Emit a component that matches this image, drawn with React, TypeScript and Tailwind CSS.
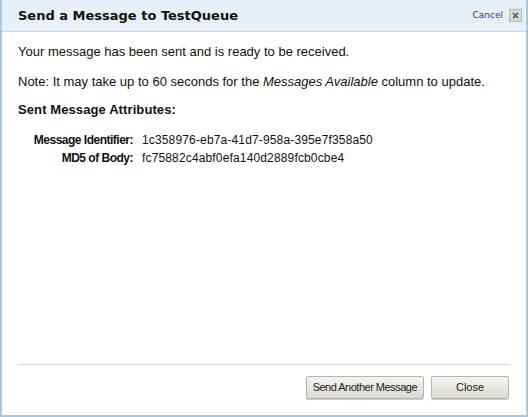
export default function App() {
  return (
    <div className="w-[528px] h-[417px] bg-white font-['Liberation_Sans',Arial,sans-serif] text-[#111]">
      <div className="flex flex-col h-full border-x-2 border-b-2 border-[#a9c8e0]">
        <header className="h-[32px] shrink-0 flex items-center justify-between pl-4 pr-[4px] bg-[#e8f0f7] border-b border-[#c6dbeb]">
          <h1 className="font-['DejaVu_Sans',Verdana,sans-serif] font-bold text-[13px] text-[#111]">
            Send a Message to TestQueue
          </h1>
          <div className="flex items-center gap-[6px]">
            <a className="font-['DejaVu_Sans',Verdana,sans-serif] text-[9px] text-[#333399] cursor-pointer">Cancel</a>
            <button className="w-[13px] h-[13px] flex items-center justify-center bg-[#d9d9d9] border border-[#b9b9b9]">
              <svg width="7" height="7" viewBox="0 0 7 7">
                <path d="M1 1 L6 6 M6 1 L1 6" stroke="#555" strokeWidth="1.6" />
              </svg>
            </button>
          </div>
        </header>

        <main className="flex-1 flex flex-col px-4 pt-[11px] text-[13px]">
          <p className="leading-[17px]">Your message has been sent and is ready to be received.</p>
          <p className="leading-[17px] mt-[13px]">
            Note: It may take up to 60 seconds for the <i>Messages Available</i> column to update.
          </p>
          <h2 className="font-bold text-[13px] tracking-[0.1px] leading-[18px] mt-[11px]">Sent Message Attributes:</h2>
          <dl className="grid grid-cols-[115px_1fr] gap-x-[9px] mt-[12px] text-[12px] leading-[18px]">
            <dt className="font-bold text-right tracking-[-0.5px]">Message Identifier:</dt>
            <dd className="tracking-[0.15px]">1c358976-eb7a-41d7-958a-395e7f358a50</dd>
            <dt className="font-bold text-right tracking-[-0.5px]">MD5 of Body:</dt>
            <dd className="tracking-[0.15px]">fc75882c4abf0efa140d2889fcb0cbe4</dd>
          </dl>
          <div className="flex-1" />
          <div className="border-t border-[#dcd8c4]" />
          <div className="flex justify-end gap-[7px] pt-[11px] pb-[16px] pr-[1px]">
            <button className="h-[23px] px-[6px] text-[11px] tracking-[-0.5px] text-[#222] bg-gradient-to-b from-[#f4f3ee] to-[#dcdbd2] border border-[#b5b4ad] rounded-[2px] shadow-[0_1px_0_#d0d0d0]">
              Send Another Message
            </button>
            <button className="h-[23px] w-[78px] text-[11px] text-[#222] bg-gradient-to-b from-[#f4f3ee] to-[#dcdbd2] border border-[#b5b4ad] rounded-[2px] shadow-[0_1px_0_#d0d0d0]">
              Close
            </button>
          </div>
        </main>
      </div>
    </div>
  );
}
